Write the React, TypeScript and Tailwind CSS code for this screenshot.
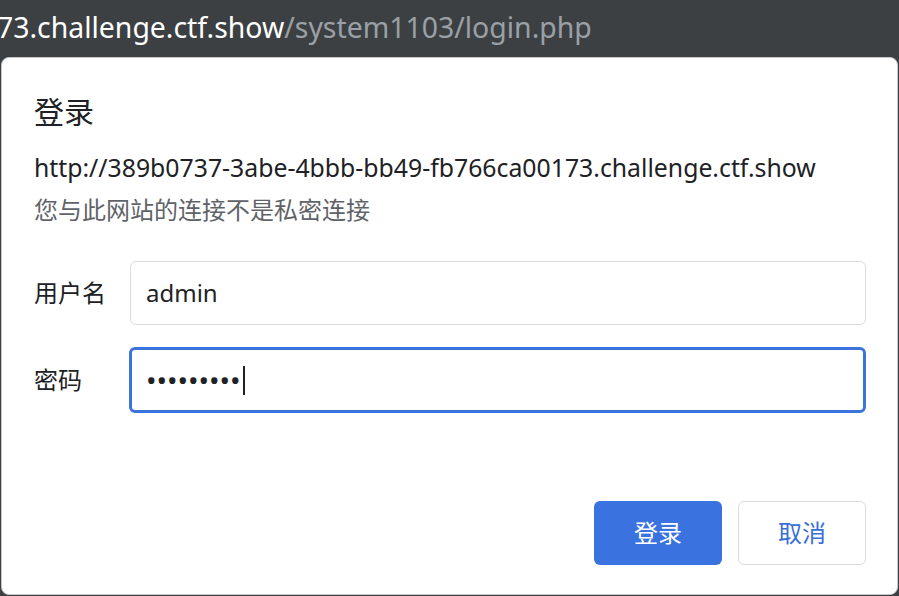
const font = "font-['Noto_Sans','Noto_Sans_CJK_SC',sans-serif]";

function AddressBar() {
  return (
    <div className="h-[57px] overflow-hidden flex items-center">
      <p className={`-ml-[3px] -mt-[2px] whitespace-nowrap text-[28.4px] leading-none ${font}`}>
        <span className="text-white">73.challenge.ctf.show</span>
        <span className="text-[#9aa0a6]">/system1103/login.php</span>
      </p>
    </div>
  );
}

function Field({ label, children }: { label: string; children: React.ReactNode }) {
  return (
    <div className="flex items-center">
      <span className="w-[96px] text-[24px] text-[#202124]">{label}</span>
      {children}
    </div>
  );
}

export default function App() {
  return (
    <div className={`h-[596px] w-[899px] overflow-hidden bg-[#3c4043] ${font}`}>
      <AddressBar />
      <section className="ml-[1px] h-[538px] w-[897px] rounded-[8px] border border-[#c6c6c6] bg-white pl-[32px] pr-[31px] pt-[34px]">
        <h2 className="text-[30px] leading-[40px] text-[#202124]">登录</h2>
        <p className="mt-[18px] whitespace-nowrap text-[24.8px] leading-[34px] text-[#202124]">
          http://389b0737-3abe-4bbb-bb49-fb766ca00173.challenge.ctf.show
        </p>
        <p className="mt-[9px] text-[24px] leading-[34px] text-[#5f6368]">您与此网站的连接不是私密连接</p>

        <div className="mt-[34px] flex flex-col gap-[22px]">
          <Field label="用户名">
            <div className="flex h-[64px] w-[736px] items-center rounded-[6px] border border-[#dadce0] px-[15px] text-[24px] text-[#202124]">
              admin
            </div>
          </Field>
          <Field label="密码">
            <div className="-ml-[1px] flex h-[66px] w-[738px] items-center rounded-[6px] border-[3px] border-[#3b74de] px-[14px] text-[24px] text-[#202124]">
              <span className="text-[28px] tracking-[0px]">•••••••••</span>
              <span className="ml-[2px] h-[29px] w-[2px] bg-[#202124]" />
            </div>
          </Field>
        </div>

        <div className="mt-[88px] flex justify-end gap-[16px]">
          <button className="h-[64px] w-[128px] rounded-[6px] bg-[#3a73e0] text-[24px] text-white">登录</button>
          <button className="h-[64px] w-[128px] rounded-[6px] border border-[#dadce0] bg-white text-[24px] text-[#3a6fd8]">
            取消
          </button>
        </div>
      </section>
    </div>
  );
}
